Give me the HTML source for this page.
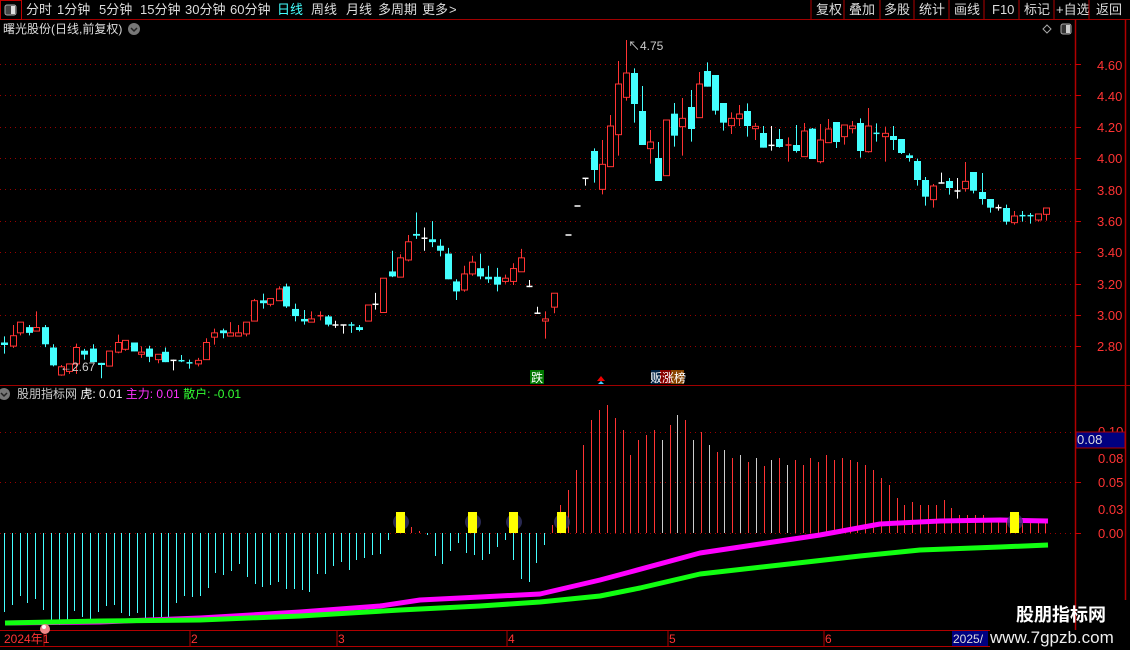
<!DOCTYPE html>
<html><head><meta charset="utf-8"><style>
*{margin:0;padding:0;box-sizing:border-box}
body{width:1130px;height:650px;background:#000;overflow:hidden;position:relative;font-family:"Liberation Sans","Noto Sans CJK SC",sans-serif;color:#ccc}
</style></head><body>
<svg id="s" width="1130" height="650" style="position:absolute;left:0;top:0" xmlns="http://www.w3.org/2000/svg">
<g font-family="Liberation Sans,Noto Sans CJK SC,sans-serif">
<line x1="0" y1="19.5" x2="1130" y2="19.5" stroke="#a00000"/>
<rect x="0.5" y="0.5" width="21" height="19" fill="none" stroke="#c00000"/>
<rect x="5" y="5" width="11" height="10" rx="2" fill="#444" stroke="#aaa"/>
<rect x="11" y="6" width="4" height="8" fill="#ddd"/>
<g font-size="13" fill="#ddd">
<text x="26" y="14">分时</text><text x="57" y="14">1分钟</text><text x="99" y="14">5分钟</text><text x="140" y="14">15分钟</text><text x="185" y="14">30分钟</text><text x="230" y="14">60分钟</text>
<text x="277" y="14" fill="#4ff">日线</text><text x="311" y="14">周线</text><text x="346" y="14">月线</text><text x="378" y="14">多周期</text><text x="422" y="14">更多</text><text x="449" y="14">&gt;</text>
<text x="816" y="14">复权</text><text x="849" y="14">叠加</text><text x="884" y="14">多股</text><text x="919" y="14">统计</text><text x="954" y="14">画线</text><text x="992" y="14">F10</text><text x="1024" y="14">标记</text><text x="1056" y="14">+自选</text><text x="1096" y="14">返回</text>
</g>
<g stroke="#b00000"><line x1="811" y1="0" x2="811" y2="19"/><line x1="844" y1="0" x2="844" y2="19"/><line x1="880" y1="0" x2="880" y2="19"/><line x1="914" y1="0" x2="914" y2="19"/><line x1="949" y1="0" x2="949" y2="19"/><line x1="984" y1="0" x2="984" y2="19"/><line x1="1019" y1="0" x2="1019" y2="19"/><line x1="1054" y1="0" x2="1054" y2="19"/><line x1="1089" y1="0" x2="1089" y2="19"/></g>
<text x="3" y="33" font-size="12" fill="#ddd">曙光股份(日线,前复权)</text>
<circle cx="134" cy="29" r="6" fill="#777"/><path d="M131 28l3 3 3-3" stroke="#222" stroke-width="1.5" fill="none"/>
<path d="M1047 25l4 4-4 4-4-4z" fill="none" stroke="#aaa"/>
<rect x="1061" y="24" width="10" height="10" rx="2" fill="#333" stroke="#aaa"/><rect x="1066" y="25" width="4" height="8" fill="#ccc"/>
<line x1="1075.5" y1="19" x2="1075.5" y2="630" stroke="#b00000" stroke-width="1.5"/>
<line x1="1125.5" y1="19" x2="1125.5" y2="600" stroke="#b00000" stroke-width="1.5"/>
<line x1="0" y1="385.5" x2="1130" y2="385.5" stroke="#a00000"/>
<line x1="0" y1="630.5" x2="990" y2="630.5" stroke="#b00000"/>
<line x1="0" y1="646.5" x2="990" y2="646.5" stroke="#b00000"/>
<g id="grid"></g>
<g font-size="13" fill="#f33">
<text x="1097" y="70">4.60</text><text x="1097" y="101">4.40</text><text x="1097" y="132">4.20</text><text x="1097" y="163">4.00</text><text x="1097" y="195">3.80</text><text x="1097" y="226">3.60</text><text x="1097" y="257">3.40</text><text x="1097" y="289">3.20</text><text x="1097" y="320">3.00</text><text x="1097" y="351">2.80</text>
<text x="1098" y="436">0.10</text><text x="1098" y="463">0.08</text><text x="1098" y="487">0.05</text><text x="1098" y="514">0.03</text><text x="1098" y="538">0.00</text>
</g>
<rect x="1076" y="432" width="49" height="16" fill="#000080" stroke="#b00000"/>
<text x="1077" y="444" font-size="13" fill="#ddd">0.08</text>
<g id="cand"></g>
<g id="osc"></g>
<g font-size="12" fill="#ccc"><text x="60" y="371">←2.67</text><text x="628" y="50">↖4.75</text></g>
<rect x="530" y="370" width="14" height="14" fill="#070"/><text x="531" y="382" font-size="12" fill="#fff">跌</text>
<path d="M597 381l4-5 4 5z" fill="#e00"/><path d="M598 384l3-3 3 3z" fill="#4cf"/>
<rect x="651" y="370" width="10" height="14" fill="#024"/><rect x="660" y="370" width="12" height="14" fill="#800"/><rect x="671" y="370" width="13" height="14" fill="#840"/>
<text x="650" y="382" font-size="12" fill="#fff">贩涨榜</text>
<circle cx="4" cy="394" r="6" fill="#777"/><path d="M1 393l3 3 3-3" stroke="#222" stroke-width="1.5" fill="none"/>
<text x="17" y="398" font-size="12"><tspan fill="#ccc">股朋指标网 </tspan><tspan fill="#fff">虎: 0.01 </tspan><tspan fill="#f3f">主力: 0.01 </tspan><tspan fill="#3f3">散户: -0.01</tspan></text>
<g stroke="#b00000"><line x1="44" y1="630" x2="44" y2="646"/><line x1="190" y1="630" x2="190" y2="646"/><line x1="337" y1="630" x2="337" y2="646"/><line x1="507" y1="630" x2="507" y2="646"/><line x1="668" y1="630" x2="668" y2="646"/><line x1="824" y1="630" x2="824" y2="646"/></g>
<g font-size="12" fill="#f33"><text x="4" y="643">2024年1</text><text x="191" y="643">2</text><text x="338" y="643">3</text><text x="508" y="643">4</text><text x="669" y="643">5</text><text x="825" y="643">6</text></g>
<rect x="952" y="631" width="36" height="15" fill="#000080"/><text x="953" y="643" font-size="12" fill="#ddd">2025/</text>
<circle cx="45" cy="629" r="5" fill="#e88"/><circle cx="44" cy="627" r="2" fill="#fff"/>
<text x="1016" y="621" font-size="18" font-weight="bold" fill="#fff">股朋指标网</text>
<text x="990" y="643" font-size="17" fill="#eee">www.7gpzb.com</text>
</g></svg>
<script>
var NS="http://www.w3.org/2000/svg";
function el(p,t,a){var e=document.createElementNS(NS,t);for(var k in a)e.setAttribute(k,a[k]);p.appendChild(e);return e;}
var g=document.getElementById('grid');
[64,95,127,158,189,221,252,284,315,346,432,482,533].forEach(function(y){el(g,'line',{x1:0,y1:y+.5,x2:1075,y2:y+.5,stroke:'#900',"stroke-dasharray":"1,4"});
el(g,'line',{x1:1075,y1:y+.5,x2:1081,y2:y+.5,stroke:'#c00'});});
var A=[[12,427,434,'c',410,458],[35,408,437,'r',378,442],[57,370,400,'r',370,407],[80,384,400,'c',378,407],[102,385,395,'r',340,395],[125,384,432,'c',378,440],[147,441,491,'c',432,494],[170,495,518,'r',490,520],[192,487,508,'r',487,515],[214,441,487,'r',430,515],[236,450,461,'c',445,475],[259,444,482,'c',432,482],[284,484,490,'c',484,527],[306,451,493,'r',451,493],[329,427,454,'r',405,457],[351,421,446,'r',421,450],[374,427,452,'c',427,452],[396,454,460,'r',438,470],[418,444,467,'c',436,482],[441,460,475,'r',460,485],[463,453,482,'c',441,482],[485,477,477,'w',475,505],[508,478,482,'c',462,482],[530,484,486,'c',475,500],[555,477,487,'r',470,494],[578,427,475,'r',415,475],[600,400,412,'r',388,433],[623,393,401,'c',388,415],[645,400,409,'r',370,409],[667,400,409,'r',378,409],[690,370,403,'r',370,410],[712,310,367,'r',305,367],[735,309,317,'c',290,332],[757,304,320,'r',304,326],[780,277,310,'r',270,310],[802,270,326,'c',262,330],[827,333,353,'c',318,368],[850,361,368,'c',336,377],[872,361,370,'r',340,370],[895,352,355,'r',340,365],[917,354,377,'c',350,382],[938,378,378,'w',366,386],[961,378,378,'w',378,402],[984,378,382,'c',370,400],[1006,384,392,'c',378,396],[1029,322,367,'r',322,367],[1050,320,320,'w',288,335],[1073,247,343,'r',247,343],[1098,228,242,'c',170,244],[1121,190,244,'r',180,244],[1143,145,196,'r',126,200],[1165,123,128,'c',63,137],[1187,135,135,'w',105,170],[1210,138,146,'c',87,160],[1233,156,170,'c',138,186],[1255,178,250,'c',162,250],[1277,256,284,'c',250,308],[1300,235,280,'r',212,285],[1322,202,235,'r',184,240],[1345,219,242,'c',178,250],[1367,243,250,'c',212,260],[1392,243,265,'c',218,284],[1415,247,256,'r',237,262],[1437,220,256,'r',205,266],[1460,190,229,'r',165,229],[1481,270,270,'w',252,272],[1503,345,345,'w',327,347],[1527,361,367,'r',340,416],[1550,289,328,'r',289,345]];
var B=[[25,585,585,'w',585,585],[50,498,498,'w',498,498],[75,415,415,'w',415,437],[103,333,390,'c',325,428],[127,373,448,'r',300,463],[151,258,380,'r',225,380],[175,132,284,'r',63,347],[199,99,172,'r',0,182],[223,99,192,'c',85,248],[247,213,315,'c',138,315],[271,306,326,'r',270,371],[295,354,423,'c',306,423],[319,240,407,'r',240,407],[343,221,287,'c',189,320],[367,235,260,'r',174,347],[394,201,267,'c',150,305],[418,132,233,'r',96,233],[442,93,140,'c',67,140],[466,105,212,'c',105,224],[490,189,248,'c',189,272],[514,235,257,'r',217,282],[538,222,236,'r',195,258],[562,213,258,'c',190,290],[586,259,266,'r',249,300],[610,279,323,'c',258,323],[634,316,316,'w',258,332],[658,297,321,'c',267,323],[685,315,315,'r',292,365],[709,315,333,'c',255,338],[733,273,350,'r',249,350],[757,266,357,'c',264,357],[781,300,365,'r',252,370],[805,267,308,'r',237,308],[829,246,306,'c',246,324],[853,255,290,'r',255,314],[877,258,266,'r',243,280],[901,249,333,'c',235,353],[925,258,335,'r',204,338],[949,280,280,'c',250,305],[976,280,290,'r',260,365],[1000,288,300,'c',258,330],[1024,297,339,'c',297,342],[1048,346,354,'c',340,365],[1072,363,420,'c',356,437],[1096,420,470,'c',411,497],[1120,438,479,'r',432,503],[1144,429,429,'w',398,431],[1168,423,444,'c',414,464],[1192,453,453,'w',414,476],[1216,424,446,'r',366,455],[1240,396,452,'c',396,460],[1267,456,477,'c',399,494],[1291,477,503,'c',477,518],[1315,503,503,'w',494,512],[1339,504,545,'c',494,554],[1363,528,548,'r',513,554],[1387,527,527,'c',513,545],[1411,527,527,'c',519,551],[1435,522,540,'r',522,545],[1459,504,523,'r',504,542]];
var C=document.getElementById('cand');var col={c:'#4ff',r:'#f33',w:'#fff'};
function draw(b,sx,ox,oy){var x=Math.round(ox+b[0]/sx)+.5,t=oy+b[1]/sx,bt=oy+b[2]/sx,wt=oy+b[4]/sx,wb=oy+b[5]/sx,c=col[b[3]];
el(C,'line',{x1:x,y1:wt,x2:x,y2:wb,stroke:c});
if(bt-t<1.5){el(C,'line',{x1:x-3,y1:t,x2:x+3,y2:t,stroke:c,"stroke-width":1.5});return;}
if(b[3]=='r')el(C,'rect',{x:x-3,y:t,width:6,height:bt-t,fill:'#000',stroke:c});
else el(C,'rect',{x:x-3.5,y:t,width:7,height:bt-t,fill:c});}
A.forEach(function(b){draw(b,2.8,0,190);});B.forEach(function(b){draw(b,3,560,40);});
var O=document.getElementById('osc');
var L=[612,605,596,603,599,610,620,625,620,611,617,620,612,606,605,613,616,613,619,619,617,617,603,596,597,596,588,573,575,571,564,577,584,587,585,582,589,589,590,592,574,574,566,562,570,560,558,555,554,540,530,526,527,531,535,556,564,551,543,553,555,560,554,547,540,560,579,582,563,545,525,505,490,470,445,420,410,405,418,430,455,440,435,430,440,425,415,420,440,432,445,452,450,458,455,462,458,466,460,458,465,460,465,458,462,455,460,458,460,462,465,470,478,485,498,505,502,505,505,505,500,508,515,515,515,515,520,520,522,522,520,521,522,521];
for(var i=0;i<L.length;i++){var x=Math.round(4+i*7.83)+.5,y=L[i];var c=y>533?'#4ff':(i>=84&&i<=100&&i%2==0?'#ccc':'#f33');
el(O,'line',{x1:x,y1:533,x2:x,y2:y,stroke:c});}
function pl(pts,c){el(O,'polyline',{points:pts,fill:'none',stroke:c,"stroke-width":5,"stroke-linejoin":"round"});}
pl("5,623 100,622 200,618 300,612 380,606 420,600 480,597 540,594 600,580 630,572 700,553 760,544 820,535 880,524 940,521 1000,520 1048,521",'#f0f');
pl("5,623 100,621 200,620 300,616 400,610 480,606 540,602 600,596 640,588 700,574 780,565 860,556 920,550 1000,547 1048,545",'#1f1');
[396,468,509,557,1010].forEach(function(x){el(O,'circle',{cx:x+5,cy:522,r:8,fill:'#336',opacity:.8});el(O,'rect',{x:x,y:512,width:9,height:21,fill:'#ff0'});});
</script>
</body></html>
